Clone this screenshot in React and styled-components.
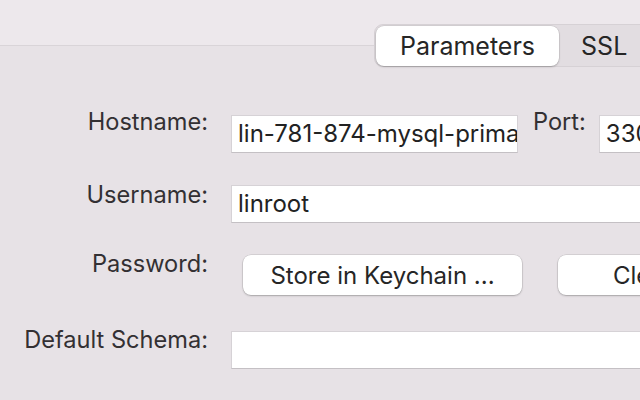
import React from 'react'
import styled, { createGlobalStyle } from 'styled-components'

const GlobalStyle = createGlobalStyle`
  html, body {
    margin: 0;
    padding: 0;
    background: #ede8ec;
  }
  body {
    font-family: Inter, "Noto Sans", sans-serif;
    -webkit-font-smoothing: antialiased;
  }
`

const Window = styled.div`
  width: 640px;
  height: 400px;
  overflow: hidden;
  background: #ede8ec;
`

const Canvas = styled.div`
  width: 1000px;
  padding-top: 24px;
`

const TabBar = styled.div`
  display: flex;
  padding-left: 374px;
  margin-bottom: -22px;
  position: relative;
  z-index: 1;
`

const Segmented = styled.div`
  display: flex;
  align-items: center;
  height: 43px;
  padding: 1px;
  box-sizing: border-box;
  background: #e2dde1;
  border: 1px solid #d6d1d5;
  border-radius: 9px;
`

const Segment = styled.div`
  display: flex;
  align-items: center;
  justify-content: center;
  height: 40px;
  box-sizing: border-box;
  padding: 0 ${p => p.$pad}px;
  font-size: 25px;
  color: #262626;
  border-radius: 8px;
  background: ${p => (p.$active ? '#ffffff' : 'transparent')};
  box-shadow: ${p => (p.$active ? '0 1px 2px rgba(0,0,0,0.22), 0 0 0 0.5px rgba(0,0,0,0.12)' : 'none')};
`

const Panel = styled.div`
  background: #e7e2e6;
  border-top: 1px solid #d9d4d8;
  padding-top: 69px;
  height: 340px;
`

const Row = styled.div`
  display: grid;
  grid-template-columns: 208px 1fr;
  column-gap: 23px;
  align-items: start;
  margin-bottom: ${p => p.$gap}px;
`

const Label = styled.div`
  text-align: right;
  font-size: 23.6px;
  line-height: 28px;
  margin-top: ${p => p.$mt ?? -6}px;
  color: #333033;
  white-space: nowrap;
`

const Fields = styled.div`
  display: flex;
  align-items: flex-start;
`

const Input = styled.div`
  width: ${p => p.$w}px;
  height: 38px;
  box-sizing: border-box;
  background: #ffffff;
  border: 1px solid #d6d2d6;
  border-bottom-color: #c4c0c4;
  padding: 0 6px;
  font-size: 24px;
  line-height: 36px;
  color: #222;
  white-space: nowrap;
  overflow: hidden;
`

const InlineLabel = styled(Label)`
  margin-left: 15px;
  margin-right: 13px;
  text-align: left;
`

const Button = styled.div`
  width: ${p => p.$w}px;
  height: 40px;
  box-sizing: border-box;
  margin-left: ${p => p.$ml}px;
  background: #ffffff;
  border-radius: 8px;
  box-shadow: 0 1px 2px rgba(0,0,0,0.22), 0 0 0 0.5px rgba(0,0,0,0.14);
  display: flex;
  align-items: center;
  justify-content: center;
  font-size: 24px;
  color: #262626;
  white-space: nowrap;
`

export default function App() {
  return (
    <Window>
      <GlobalStyle />
      <Canvas>
        <TabBar>
          <Segmented>
            <Segment $active $pad={24}>Parameters</Segment>
            <Segment $pad={22}>SSL</Segment>
            <Segment $pad={22}>Advanced</Segment>
          </Segmented>
        </TabBar>
        <Panel>
          <Row $gap={32}>
            <Label $mt={-7}>Hostname:</Label>
            <Fields>
              <Input $w={287}>lin-781-874-mysql-primary.servers.linodedb.net</Input>
              <InlineLabel $mt={-7}>Port:</InlineLabel>
              <Input $w={90}>3306</Input>
            </Fields>
          </Row>
          <Row $gap={32}>
            <Label $mt={-4}>Username:</Label>
            <Fields>
              <Input $w={560}>linroot</Input>
            </Fields>
          </Row>
          <Row $gap={36}>
            <Label $mt={-5}>Password:</Label>
            <Fields>
              <Button $ml={12} $w={279}>Store in Keychain ...</Button>
              <Button $ml={36} $w={170}>Clear</Button>
            </Fields>
          </Row>
          <Row $gap={0}>
            <Label $mt={-5}>Default Schema:</Label>
            <Fields>
              <Input $w={560}></Input>
            </Fields>
          </Row>
        </Panel>
      </Canvas>
    </Window>
  )
}
